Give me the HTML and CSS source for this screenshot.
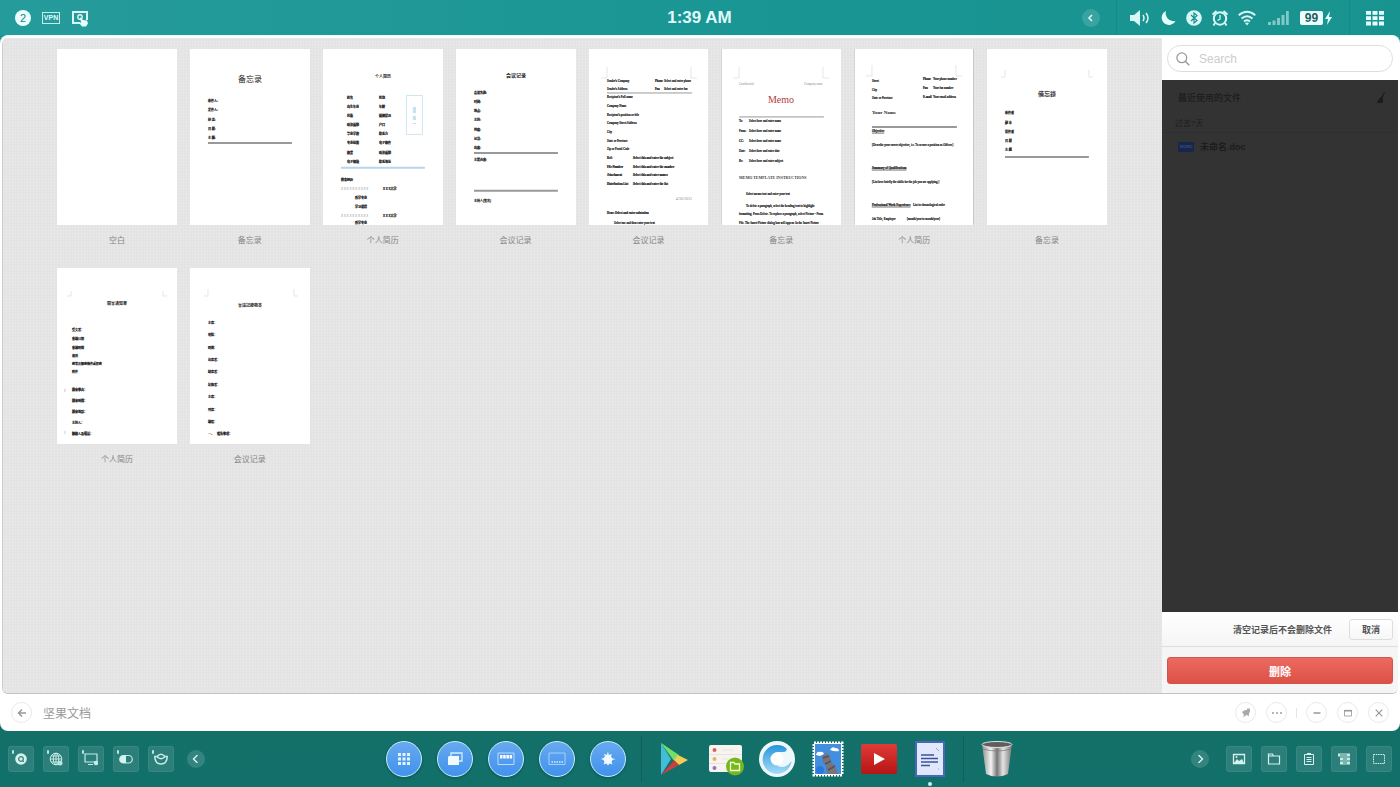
FILE: index.html
```html
<!DOCTYPE html>
<html lang="zh-CN">
<head>
<meta charset="utf-8">
<meta name="viewport" content="width=device-width, initial-scale=1">
<title>坚果文档</title>
<link rel="stylesheet" href="styles.css">
</head>
<body>
<header class="status">
  <div class="status-left">
    <span class="count">2</span>
    <span class="vpn">VPN</span>
    <svg width="18" height="18" viewBox="0 0 18 18"><path d="M9 14H2V3h14v8" fill="none" stroke="#d8f8f8" stroke-width="2"/><circle cx="9" cy="8" r="2.200" fill="none" stroke="#d8f8f8" stroke-width="1.400"/><path d="M9 8l3 3 4 .5 1 3-2 3h-4L8 14l2-.5z" fill="#e4ffff"/></svg>
  </div>
  <time class="clock">1:39 AM</time>
  <div class="status-right">
    <button class="round-arrow" aria-label="收起"><svg width="8" height="8" viewBox="0 0 8 8"><path d="M5 1L2 4l3 3" fill="none" stroke="currentColor" stroke-width="1.500"/></svg></button>
    <span class="bar-line"></span>
    <svg width="20" height="18" viewBox="0 0 20 18"><path d="M0 6h4l6-5v16l-6-5H0z" fill="#d8f8f8"/><path d="M13 6q2 3 0 6M16 4q4 5 0 10" fill="none" stroke="#d8f8f8" stroke-width="1.500"/></svg>
    <svg width="16" height="16" viewBox="0 0 16 16"><path d="M6 1a7.300 7.300 0 1 0 9.500 10A8 8 0 0 1 6 1z" fill="#e4ffff"/></svg>
    <svg width="16" height="16" viewBox="0 0 16 16"><circle cx="8" cy="8" r="7.800" fill="#d8f8f8"/><path d="M5 5l6 5.500L8 13V3l3 2.500L5 11" fill="none" stroke="#1a8d8c" stroke-width="1.200"/></svg>
    <svg width="16" height="16" viewBox="0 0 16 16"><circle cx="8" cy="8.500" r="6.200" fill="none" stroke="#d8f8f8" stroke-width="2"/><path d="M8 5v4L5.500 10.500" fill="none" stroke="#d8f8f8" stroke-width="1.300"/><path d="M.5 4.500l4-3.500M15.500 4.500l-4-3.500M3 13l-1.500 2.500M13 13l1.500 2.500" stroke="#d8f8f8" stroke-width="1.800"/></svg>
    <svg width="18" height="16" viewBox="0 0 18 16"><g fill="none" stroke="#d8f8f8" stroke-width="2"><path d="M.7 5.200q8.300-7 16.600 0M3.500 8.500q5.500-4.500 11 0M6 11.500q3-2.400 6 0"/></g><path d="M7 13q2-1.200 4 0l-2 2.500z" fill="#d8f8f8"/></svg>
    <svg class="signal" width="21" height="16" viewBox="0 0 21 16"><path d="M0 12h3v3H0zM4.500 10.500h3V15h-3zM9 8h3v7H9zM13.500 5h3v10h-3zM18 1h2.800v14H18z" fill="#7fc9c8"/></svg>
    <span class="battery"><span class="cell">99</span><svg width="9" height="14" viewBox="0 0 9 14"><path d="M6 0L1 8h3L3 14l5-8H5z" fill="#e4ffff"/></svg></span>
    <span class="bar-line"></span>
    <svg width="18" height="16" viewBox="0 0 18 16"><path d="M0 1h5v3.800H0zM6.500 1h5v3.800h-5zM13 1h5v3.800h-5zM0 6.300h5v3.800H0zM6.500 6.300h5v3.800h-5zM13 6.300h5v3.800h-5zM0 11.600h5v3.800H0zM6.500 11.600h5v3.800h-5zM13 11.600h5v3.800h-5z" fill="#e4ffff"/></svg>
  </div>
</header>

<main class="window">
  <div class="workspace">
    <section class="templates">
      <a class="template" href="#"><svg class="page" viewBox="0 0 120 176"></svg><span class="name">空白</span></a>
      <a class="template" href="#"><svg class="page" viewBox="0 0 120 176">
        <text class="mid s8 serif" x="60" y="33">备忘录</text>
        <g class="s3 b"><text x="18" y="53">收件人:</text><text x="18" y="62">发件人:</text><text x="18" y="72">抄 送:</text><text x="18" y="81">日 期:</text><text x="18" y="90">主 题:</text></g>
        <path class="rule" d="M18 94h84"/>
      </svg><span class="name">备忘录</span></a>
      <a class="template" href="#"><svg class="page" viewBox="0 0 120 176">
        <text class="mid s4 b" x="60" y="29">个人简历</text>
        <g class="s3 b"><text x="24" y="50">姓名</text><text x="24" y="59">出生年月</text><text x="24" y="68">民族</text><text x="24" y="77">政治面貌</text><text x="24" y="86">毕业学校</text><text x="24" y="95">专业技能</text><text x="24" y="105">籍贯</text><text x="24" y="114">电子邮箱</text>
        <text x="56" y="50">性别</text><text x="56" y="59">年龄</text><text x="56" y="68">婚姻状况</text><text x="56" y="77">户口</text><text x="56" y="86">联系方</text><text x="56" y="95">电子邮件</text><text x="56" y="105">政治面貌</text><text x="56" y="114">联系地址</text>
        <text x="18" y="132">教育经历</text><text x="32" y="150">所学专业</text><text x="32" y="159">学习课程</text><text x="60" y="141">X X X大学</text><text x="60" y="168">X X X大学</text><text x="32" y="175">所学专业</text></g>
        <g class="s3 dim"><text x="18" y="141">X X X X X X X X X X</text><text x="18" y="168">X X X X X X X X X X</text></g>
        <path class="photo" d="M83.500 46.500h16v39h-16z"/><path d="M90 58h3v6h-3zM90 67h3v4h-3zM90 74h3v1h-3z" fill="#c5e2f5"/>
        <path class="rule blue" d="M18 119h84"/>
      </svg><span class="name">个人简历</span></a>
      <a class="template" href="#"><svg class="page" viewBox="0 0 120 176">
        <text class="mid s5 b serif" x="60" y="28">会议记录</text>
        <g class="s3 b"><text x="18" y="45">会议名称:</text><text x="18" y="54">时间:</text><text x="18" y="63">地点:</text><text x="18" y="72">主持:</text><text x="18" y="82">列席:</text><text x="18" y="91">记录:</text><text x="18" y="100">出席:</text></g>
        <path class="rule" d="M18 104h84M18 142h84"/>
        <text class="s3 b" x="18" y="112">主要内容:</text><text class="s3" x="18" y="153">主持人(签名)</text>
      </svg><span class="name">会议记录</span></a>
      <a class="template" href="#"><svg class="page latin" viewBox="0 0 120 176">
        <path class="crop" d="M12 29h6V18M108 29h-6V18"/>
        <g class="s3"><text x="18" y="33">Sender's Company</text><text x="18" y="41">Sender's Address</text><text x="75" y="33">Select and enter phone</text><text x="75" y="41">Select and enter fax</text><text x="18" y="49">Recipient's Full name</text><text x="18" y="58">Company Name</text><text x="18" y="67">Recipient's position or title</text><text x="18" y="75">Company Street Address</text><text x="18" y="84">City</text><text x="18" y="93">State or Province</text><text x="18" y="101">Zip or Postal Code</text><text x="25" y="175">Select me and then enter your text</text></g>
        <g class="s3 b"><text x="66" y="33">Phone</text><text x="66" y="41">Fax</text><text x="18" y="110">Ref:</text><text x="18" y="119">File Number</text><text x="18" y="127">Attachment</text><text x="18" y="136">Distribution List</text><text x="44" y="110">Select this and enter the subject</text><text x="44" y="119">Select this and enter the number</text><text x="44" y="127">Select this and enter names</text><text x="44" y="136">Select this and enter the list</text><text x="18" y="165">Dear: Select and enter salutation</text></g>
        <text class="s4 end dim" x="103" y="151">4/30/2013</text>
        <path class="rule thin" d="M18 44h85"/><path class="edge" d="M120 0v176"/>
      </svg><span class="name">会议记录</span></a>
      <a class="template" href="#"><svg class="page latin" viewBox="0 0 120 176">
        <path class="crop" d="M12 29h6V18M108 29h-6V18"/>
        <text class="s3 dim" x="18" y="36">Confidential</text><text class="s3 end dim" x="102" y="36">Company name</text>
        <text class="mid s10 red" x="60" y="54">Memo</text>
        <path class="rule thin" d="M18 68h85"/>
        <g class="s3"><text x="18" y="73">To:</text><text x="18" y="83">From:</text><text x="18" y="93">CC:</text><text x="18" y="103">Date:</text><text x="18" y="113">Re:</text><text x="28" y="73">Select here and enter name</text><text x="28" y="83">Select here and enter name</text><text x="28" y="93">Select here and enter name</text><text x="28" y="103">Select here and enter date</text><text x="28" y="113">Select here and enter subject</text>
        <text x="25" y="146">Select memo text and enter your text</text><text x="25" y="158">To delete a paragraph, select the heading text to highlight</text><text x="18" y="166">formatting. Press Delete. To replace a paragraph, select Picture - From</text><text x="18" y="175">File. The Insert Picture dialog box will appear. In the Insert Picture</text></g>
        <text class="s4 b grey" x="18" y="130">MEMO TEMPLATE INSTRUCTIONS</text>
        <path class="edge" d="M0 0v176"/>
      </svg><span class="name">备忘录</span></a>
      <a class="template" href="#"><svg class="page latin" viewBox="0 0 120 176">
        <path class="crop" d="M12 27h6V16M108 27h-6V16"/>
        <g class="s3"><text x="18" y="33">Street</text><text x="18" y="42">City</text><text x="18" y="50">State or Province</text><text x="79" y="31">Your phone number</text><text x="79" y="40">Your fax number</text><text x="79" y="49">Your email address</text><text x="18" y="97">[Describe your career objective, i.e. To secure a position as Officer.]</text><text x="18" y="134">[List here briefly the skills for the job you are applying.]</text><text x="59" y="157">List in chronological order</text><text x="18" y="171">Job Title, Employer</text><text x="53" y="171">[month/year to month/year]</text></g>
        <g class="s3 b"><text x="69" y="31">Phone</text><text x="69" y="40">Fax</text><text x="69" y="49">E-mail</text><text class="u" x="18" y="83">Objective</text><text class="u" x="18" y="120">Summary of Qualifications</text><text class="u" x="18" y="157">Professional Work Experience</text></g>
        <text class="s5 b" x="18" y="65">Your Name</text>
        <path class="rule" d="M18 78h85"/><path class="edge" d="M0 0v176M120 0v176"/>
      </svg><span class="name">个人简历</span></a>
      <a class="template" href="#"><svg class="page" viewBox="0 0 120 176">
        <path class="crop" d="M14 28h4v-7M106 28h-4v-7"/>
        <text class="mid s6 b grey" x="60" y="47">備忘錄</text>
        <g class="s3 b"><text x="18" y="65">收件者</text><text x="18" y="75">副 本</text><text x="18" y="84">寄件者</text><text x="18" y="93">日 期</text><text x="18" y="102">主 題</text></g>
        <path class="rule" d="M18 108h84"/>
      </svg><span class="name">备忘录</span></a>
      <a class="template" href="#"><svg class="page" viewBox="0 0 120 176">
        <path class="crop" d="M10 28h4v-5M110 28h-4v-5"/>
        <text class="mid s4 b" x="60" y="37">開會通知單</text>
        <g class="s3"><text x="15" y="63">受文者：</text><text x="15" y="72">會議日期</text><text x="15" y="81">會議時間</text><text x="15" y="89">速別</text><text x="15" y="97">密等及解密條件或保密</text><text x="15" y="105">附件</text></g>
        <g class="s3 b"><text x="15" y="123">開會事由：</text><text x="15" y="134">開會時間：</text><text x="15" y="145">開會地點：</text><text x="15" y="156">主持人：</text><text x="15" y="167">聯絡人及電話：</text></g>
        <path d="M8 121v3" stroke="#efb0b0"/><path d="M8 163v3" stroke="#ccc"/>
      </svg><span class="name">个人简历</span></a>
      <a class="template" href="#"><svg class="page" viewBox="0 0 120 176">
        <path class="crop" d="M14 28h4v-7M108 28h-4v-7"/>
        <text class="mid s4 b" x="60" y="39">會議記錄範本</text>
        <g class="s3"><text x="18" y="56">主席：</text><text x="18" y="68">地點：</text><text x="18" y="81">時間：</text><text x="18" y="93">出席者：</text><text x="18" y="105">缺席者：</text><text x="18" y="118">記錄者：</text><text x="18" y="130">主席：</text><text x="18" y="143">列席：</text><text x="18" y="155">議程：</text><text x="18" y="167">一、</text><text class="b" x="27" y="167">報告事項：</text></g>
      </svg><span class="name">会议记录</span></a>
    </section>

    <aside class="sidebar">
      <div class="search-area">
        <label class="search">
          <svg width="14" height="14" viewBox="0 0 14 14"><circle cx="5.800" cy="5.800" r="4.900" fill="none" stroke="#999" stroke-width="1.300"/><path d="M9.300 9.300l4 4" stroke="#999" stroke-width="1.500"/></svg>
          <input type="search" placeholder="Search" aria-label="Search">
        </label>
      </div>
      <div class="recent">
        <div class="recent-head"><h2>最近使用的文件</h2><svg width="10" height="12" viewBox="0 0 10 12"><path d="M8 0L6 4 2 8 1 11h6V5L9 0z" fill="#1c1c1c"/></svg></div>
        <h3>过去7天</h3>
        <a class="file" href="#"><span class="file-type">WORD</span>未命名.doc</a>
      </div>
      <div class="confirm"><span>清空记录后不会删除文件</span><button class="cancel">取消</button></div>
      <div class="delete-area"><button class="delete">删除</button></div>
    </aside>
  </div>

  <footer class="window-bar">
    <button class="circle" aria-label="返回"><svg width="10" height="10" viewBox="0 0 10 10"><path d="M9 5H2M5 1.500L1.500 5 5 8.500" fill="none" stroke="#999" stroke-width="1.500"/></svg></button>
    <h1>坚果文档</h1>
    <div class="window-tools">
      <button class="circle" aria-label="固定"><svg width="10" height="10" viewBox="0 0 10 10"><path d="M6 .5h3V4L8 5v3L5.500 7 2 9.500 3 7 1 4l3-2h2z" fill="#aaa"/></svg></button>
      <button class="circle" aria-label="更多"><svg width="10" height="10" viewBox="0 0 10 10"><path d="M0 4h2v2H0zM4 4h2v2H4zM8 4h2v2H8z" fill="#b5b5b5"/></svg></button>
      <span class="tool-line"></span>
      <button class="circle" aria-label="最小化"><svg width="10" height="10" viewBox="0 0 10 10"><path d="M1.500 5h7" stroke="#999" stroke-width="1.500"/></svg></button>
      <button class="circle" aria-label="最大化"><svg width="10" height="10" viewBox="0 0 10 10"><path d="M1.500 2.500h7v5.500h-7z" fill="none" stroke="#aaa"/><path d="M1 2.700h8" stroke="#999" stroke-width="1.600"/></svg></button>
      <button class="circle" aria-label="关闭"><svg width="10" height="10" viewBox="0 0 10 10"><path d="M1.700 1.700l6.600 6.600M8.300 1.700L1.700 8.300" stroke="#999" stroke-width="1.200"/></svg></button>
    </div>
  </footer>
</main>

<nav class="dock">
  <div class="dock-left">
    <button class="tile marked" aria-label="搜索"><svg width="14" height="14" viewBox="0 0 14 14"><circle cx="7" cy="7" r="5.800" fill="#d4f2ee"/><circle cx="7" cy="7" r="2.300" fill="none" stroke="#38857f" stroke-width="1.300"/><path d="M8 8l2 2" stroke="#38857f"/></svg></button>
    <button class="tile marked" aria-label="浏览器"><svg width="14" height="14" viewBox="0 0 14 14"><g fill="none" stroke="#c4ebe6"><circle cx="7" cy="7" r="5.800"/><ellipse cx="7" cy="7" rx="2.700" ry="5.800"/><path d="M1 7h12M7 1v12M2 4h10M2 10h10"/></g><circle cx="11" cy="11" r="2.500" fill="#b8e2dc"/></svg></button>
    <button class="tile marked" aria-label="屏幕"><svg width="14" height="14" viewBox="0 0 14 14"><path d="M1 2h12v8H1zM4 12.500h5" fill="none" stroke="#c4ebe6" stroke-width="1.200"/><circle cx="12" cy="11" r="2.300" fill="#c4ebe6"/></svg></button>
    <button class="tile marked" aria-label="开关"><svg width="14" height="14" viewBox="0 0 14 14"><rect x=".7" y="3.500" width="12.600" height="7.500" rx="3.700" fill="none" stroke="#c4ebe6" stroke-width="1.200"/><path d="M7 3.500v7.500H4.500a3.700 3.700 0 0 1 0-7.500z" fill="#d4f2ee"/></svg></button>
    <button class="tile marked" aria-label="碗"><svg width="14" height="14" viewBox="0 0 14 14"><g fill="none" stroke="#c4ebe6" stroke-width="1.500"><path d="M.8 4.500h2Q7 9 11.200 4.500h2Q13 12 7 12T.8 4.500z"/><path d="M3 4.500Q7 0 11 4.500"/></g></svg></button>
    <button class="round-arrow" aria-label="收起左侧"><svg width="8" height="8" viewBox="0 0 8 8"><path d="M5.500 0l-4 4 4 4" fill="none" stroke="currentColor" stroke-width="1.300"/></svg></button>
  </div>
  <div class="dock-apps">
    <button class="orb" aria-label="应用"><svg width="14" height="14" viewBox="0 0 14 14"><path d="M1 1h3v3H1zM5.500 1h3v3h-3zM10 1h3v3h-3zM1 5.500h3v3H1zM5.500 5.500h3v3h-3zM10 5.500h3v3h-3zM1 10h3v3H1zM5.500 10h3v3h-3zM10 10h3v3h-3z" fill="#e2f5ff"/></svg></button>
    <button class="orb" aria-label="窗口"><svg width="16" height="14" viewBox="0 0 16 14"><path d="M4 4V1h11v8h-3" fill="none" stroke="#d5edff" stroke-width="1.300"/><path d="M1 5l1-1h10v9H1z" fill="#eefaff"/></svg></button>
    <button class="orb" aria-label="多任务"><svg width="18" height="14" viewBox="0 0 18 14"><path d="M1 1h16v11.500H1z" fill="none" stroke="#b9dcff"/><path d="M3 3h2.500v3.500H3zM6.200 3h2.500v3.500H6.200zM9.400 3h2.500v3.500H9.400zM12.600 3h2.500v3.500h-2.500z" fill="#fff"/></svg></button>
    <button class="orb" aria-label="桌面"><svg width="18" height="14" viewBox="0 0 18 14"><path d="M1 1h16v11.500H1z" fill="none" stroke="#a5cffa"/><path d="M3.500 10h12" stroke="#d5edff" stroke-width="1.500" stroke-dasharray="1.500 1"/></svg></button>
    <button class="orb" aria-label="设置"><svg width="16" height="16" viewBox="0 0 16 16"><path d="M8 .5l.8 3.500 3-1-.8 2.500 1.500 2 3 .5-3 1-1 2 1 2.500-3-1-1.500 2-1.500-2-3 1 1-2.500-1-2-2.500-1L3.500 7 5 5.500 3.800 3l3 1z" fill="#f0faff"/></svg></button>
    <span class="dock-line"></span>
    <button class="app" aria-label="Play"><svg width="36" height="36" viewBox="0 0 36 36"><path d="M4 2v32l10-16z" fill="#42bdd6"/><path d="M4 2l17 13-4 5z" fill="#53db7f"/><path d="M4 34l13-15 5 3z" fill="#a62e35"/><path d="M4 2l18 12-5 5z" fill="#76dd65"/><path d="M21 14l10 5-9 5-5-5z" fill="#f1ce55"/><path d="M4 34l13-14 5 4z" fill="#c34343"/></svg></button>
    <button class="app" aria-label="文件"><svg width="36" height="36" viewBox="0 0 36 36"><rect x="1" y="4" width="33" height="27" rx="2" fill="#f7f4f0"/><circle cx="6.500" cy="9" r="2" fill="#da625d"/><circle cx="6.500" cy="18" r="2" fill="#efaf6b"/><circle cx="6.500" cy="27" r="2" fill="#8b78b5"/><path d="M14 9h12M14 18h12M1 13.500h33M1 22.500h33" stroke="#e6e3e0"/><circle cx="27" cy="25.500" r="9" fill="#77b71e"/><path d="M22.500 21.500H26l1 1.500h4.500v6.500h-9z" fill="none" stroke="#efffd5" stroke-width="1.300"/></svg></button>
    <button class="app" aria-label="网络"><svg width="36" height="36" viewBox="0 0 36 36"><defs><linearGradient id="swirl" x2="0" y2="1"><stop stop-color="#2595dc"/><stop offset="1" stop-color="#a6dcf8"/></linearGradient></defs><circle cx="18" cy="18" r="18" fill="#eef7fc"/><path d="M27 7a14.500 14.500 0 1 0 5.500 13c-3 5-8 7-13 5.500l-5-13c4-3 9-.5 12-2 1.500-1 1.500-2.500.5-3.500z" fill="url(#swirl)"/><circle cx="18" cy="18" r="6.500" fill="#fff"/></svg></button>
    <button class="app" aria-label="图库"><svg width="36" height="36" viewBox="0 0 36 36"><path d="M4 2h28v32H4z" fill="#fff" stroke="#fff" stroke-width="3" stroke-dasharray="2 1"/><path d="M5 3h26v30H5z" fill="#428fdf"/><path d="M13 14l4-2 3 3 1 6 4 4 3 8H17l-1-8-4-6z" fill="#77747c"/><path d="M13 17l6-2M15 23l6-3M18 29l7-4" stroke="#55525e" stroke-width="1.500"/><path d="M6 14q1-4 4-3 3-1 4 2l-4 2zM20 9q2-4 5-2 4 0 4 3-4 1-9-1z" fill="#fff"/><circle cx="10" cy="29" r="4" fill="#2878df"/></svg></button>
    <button class="app" aria-label="视频"><svg width="36" height="36" viewBox="0 0 36 36"><defs><linearGradient id="red" x2="0" y2="1"><stop stop-color="#e03b35"/><stop offset="1" stop-color="#b51515"/></linearGradient></defs><rect y="3" width="36" height="30" rx="2" fill="url(#red)"/><path d="M13 12l11 6-11 6z" fill="#fff"/></svg></button>
    <button class="app running" aria-label="文档"><svg width="36" height="36" viewBox="0 0 36 36"><path d="M4 1h28v34H4z" fill="#e2e8fb" stroke="#4966b8" stroke-width="2"/><path d="M9 14h13M9 17.500h17M9 21h17M9 24.500h9" stroke="#3e5299" stroke-width="1.500"/><path d="M24 7l3 3M26 28h1" stroke="#96a3ca"/></svg></button>
    <span class="dock-line"></span>
    <button class="app" aria-label="废纸篓"><svg width="36" height="36" viewBox="0 0 36 36"><defs><linearGradient id="tin"><stop stop-color="#8e9291"/><stop offset=".3" stop-color="#f3f3f3"/><stop offset=".5" stop-color="#777"/><stop offset=".7" stop-color="#e4e4e4"/><stop offset="1" stop-color="#777"/></linearGradient></defs><path d="M3 3h30l-4 30q-11 5-22 0z" fill="url(#tin)"/><ellipse cx="18" cy="3.500" rx="15" ry="3" fill="#625d5d" stroke="#e3e3e3"/><path d="M4 8q14 4 28 0" fill="none" stroke="#777" stroke-width=".7"/></svg></button>
  </div>
  <div class="dock-right">
    <button class="round-arrow" aria-label="收起右侧"><svg width="8" height="8" viewBox="0 0 8 8"><path d="M2.500 0l4 4-4 4" fill="none" stroke="currentColor" stroke-width="1.300"/></svg></button>
    <button class="tile" aria-label="图片"><svg width="14" height="14" viewBox="0 0 14 14"><path d="M1.500 2.500h11v9h-11z" fill="none" stroke="#d4f2ee" stroke-width="1.300"/><path d="M2 11l3-4 2 2 3-2 2 4z" fill="#d4f2ee"/><circle cx="4.500" cy="5" r="1" fill="#d4f2ee"/></svg></button>
    <button class="tile" aria-label="文件夹"><svg width="14" height="14" viewBox="0 0 14 14"><path d="M1.500 2h4l1 2h6v8h-11zM1.500 4h6" fill="none" stroke="#d4f2ee" stroke-width="1.200"/></svg></button>
    <button class="tile" aria-label="剪贴板"><svg width="14" height="14" viewBox="0 0 14 14"><path d="M2.500 2.500h9v10h-9zM4.500 5.500h5M4.500 7.500h5M4.500 9.500h5" fill="none" stroke="#d4f2ee"/><path d="M5 1h4v2H5z" fill="#d4f2ee"/></svg></button>
    <button class="tile" aria-label="列表"><svg width="14" height="14" viewBox="0 0 14 14"><path d="M1 1.500h12v3H1zM3 5.500h10v3H3zM3 9.500h10v3H3z" fill="#c8ebe6"/><path d="M3 3h7M6 7h4M6 11h4" stroke="#2f817a"/></svg></button>
    <button class="tile" aria-label="选区"><svg width="14" height="14" viewBox="0 0 14 14"><path d="M1.500 2.500h11v9h-11z" fill="none" stroke="#d4f2ee" stroke-dasharray="1.500 .8"/></svg></button>
  </div>
</nav>
</body>
</html>
```
FILE: styles.css
```css
* { box-sizing: border-box; }

body {
  display: flex;
  flex-direction: column;
  min-height: 100vh;
  margin: 0;
  background: linear-gradient(#1b9695, #137069 92%, #12706a);
  font-family: "Liberation Sans", "Noto Sans CJK SC", sans-serif;
  color: #555;
}

button {
  display: flex;
  align-items: center;
  justify-content: center;
  flex: none;
  padding: 0;
  border: 0;
  background: none;
  font: inherit;
  color: inherit;
}

a { color: inherit; text-decoration: none; }
h1, h2, h3 { margin: 0; font-size: 12px; font-weight: normal; }
svg { display: block; flex: none; }

/* status bar */
.status {
  display: grid;
  grid-template-columns: 1fr auto 1fr;
  align-items: center;
  height: 35px;
  padding: 0 16px 0 15px;
  background: linear-gradient(90deg, #269b9c, #1a9694 50%, #189390);
  color: #e0fbfb;
}

.status-left { display: flex; align-items: center; gap: 11px; }

.count {
  width: 16px;
  height: 16px;
  border-radius: 50%;
  background: #eaffff;
  color: #1f7f7f;
  font-size: 11px;
  line-height: 16px;
  text-align: center;
}

.vpn {
  width: 18px;
  height: 12px;
  border: 1px solid #c0eeee;
  font-size: 7px;
  font-weight: bold;
  line-height: 10px;
  text-align: center;
}

.clock { font-size: 17px; font-weight: bold; }

.status-right { display: flex; align-items: center; justify-content: flex-end; gap: 10px; }
.status-right .bar-line { margin: 0 3px 0 6px; }
.status-right .battery + .bar-line { margin-right: 6px; }
.status-right .signal { margin: 0 1px 0 2px; }
.bar-line { width: 1px; height: 35px; background: #168a87; }

.battery { display: flex; align-items: center; gap: 1px; }

.cell {
  width: 23px;
  height: 14px;
  border-radius: 2px;
  background: #eaffff;
  color: #23615f;
  font-size: 12px;
  font-weight: bold;
  line-height: 14px;
  text-align: center;
}

.round-arrow {
  width: 18px;
  height: 18px;
  border-radius: 50%;
  background: rgba(255, 255, 255, 0.14);
  color: #e0fbfb;
}

/* application window */
.window {
  display: flex;
  flex: 1;
  flex-direction: column;
  padding: 2px 2px 0;
  border-top: 1px solid #e8ffff;
  border-radius: 8px;
  background: #fff;
}

.workspace {
  display: grid;
  flex: 1;
  grid-template-columns: 1fr 236px;
  overflow: hidden;
  border-bottom: 1px solid #bcc4c4;
  border-left: 1px solid #ccc;
  border-radius: 6px;
}

.templates {
  display: grid;
  grid-template-columns: repeat(8, minmax(0, 1fr));
  align-content: start;
  gap: 21px 13px;
  padding: 11px 55px 11px 54px;
  background:
    repeating-linear-gradient(90deg, rgba(255, 255, 255, 0.12) 0 1px, transparent 1px 3px),
    repeating-linear-gradient(0deg, rgba(255, 255, 255, 0.12) 0 1px, transparent 1px 3px),
    #e3e3e3;
}

.template { display: flex; flex-direction: column; gap: 10px; }

.page {
  width: 100%;
  background: #fff;
  fill: #222;
  font-family: "Liberation Sans", "Noto Sans CJK SC", sans-serif;
}

.latin { font-family: "Liberation Serif", serif; }

.name {
  font-size: 8px;
  line-height: 12px;
  text-align: center;
  color: #858585;
}

.s3 { font-size: 3px; stroke: #222; stroke-width: 0.2px; }
.s4 { font-size: 4px; }
.s5 { font-size: 5px; }
.s6 { font-size: 6px; }
.s8 { font-size: 8px; }
.s10 { font-size: 10px; }
.b { font-weight: bold; }
.u { text-decoration: underline; }
.mid { text-anchor: middle; }
.end { text-anchor: end; }
.serif { font-family: "Liberation Serif", "Noto Sans CJK SC", serif; }
.dim { fill: #888; stroke: none; }
.grey { fill: #444; }
.red { fill: #b03a3a; }
.rule { fill: none; stroke: #999; stroke-width: 2; }
.rule.thin { stroke-width: 1; }
.rule.blue { stroke: #b7d5ee; }
.photo { fill: none; stroke: #cfe6ee; }
.crop { fill: none; stroke: #e6e6e6; stroke-width: 1; }
.edge { fill: none; stroke: #aaa; stroke-width: 1; }

/* recent files */
.sidebar { display: flex; flex-direction: column; background: #f5f5f5; }
.search-area { padding: 7px 5px 8px; background: #fff; }

.search {
  display: flex;
  align-items: center;
  gap: 9px;
  height: 27px;
  padding: 0 8px;
  border: 1px solid #ddd;
  border-radius: 14px;
}

.search input {
  flex: 1;
  min-width: 0;
  padding: 0;
  border: 0;
  outline: 0;
  background: none;
  font: 12px "Liberation Sans", sans-serif;
}

.search input::placeholder { color: #ccc; opacity: 1; }

.recent { flex: 1; background: #333; color: #1c1c1c; }

.recent-head {
  display: flex;
  align-items: center;
  justify-content: space-between;
  height: 35px;
  padding: 0 12px 0 16px;
}

.recent h2 { font-size: 9px; font-weight: 500; }

.recent h3 {
  height: 18px;
  padding-left: 13px;
  border-bottom: 1px solid #2f2f2f;
  font-size: 8px;
  line-height: 18px;
}

.file {
  display: flex;
  align-items: center;
  gap: 6px;
  height: 27px;
  padding-left: 16px;
  font-size: 9px;
  font-weight: bold;
}

.file-type {
  width: 16px;
  height: 10px;
  border-radius: 1px;
  background: #18264f;
  color: #3e4b74;
  font-size: 4px;
  line-height: 10px;
  text-align: center;
}

.confirm {
  display: flex;
  align-items: center;
  justify-content: flex-end;
  gap: 17px;
  height: 35px;
  padding: 0 5px;
  border-bottom: 1px solid #ddd;
  background: linear-gradient(#fff, #f5f5f5);
  font-size: 9px;
  font-weight: bold;
}

.cancel {
  width: 44px;
  height: 21px;
  border: 1px solid #ddd;
  border-radius: 3px;
  background: linear-gradient(#fff, #f7f7f7);
}

.delete-area { padding: 10px 5px 9px; }

.delete {
  width: 100%;
  height: 27px;
  border: 1px solid #d0554c;
  border-radius: 3px;
  background: linear-gradient(#ec6a60, #dd5146);
  color: #fff;
  font-size: 11px;
  font-weight: bold;
}

/* window title and controls */
.window-bar {
  display: flex;
  align-items: center;
  gap: 11px;
  height: 37px;
  padding: 0 9px;
}

.window-bar h1 { color: #999; }
.window-tools { display: flex; align-items: center; gap: 10px; margin-left: auto; }
.tool-line { width: 1px; height: 10px; margin: 0 -1px; background: #e5e5e5; }

.circle {
  width: 21px;
  height: 21px;
  border: 1px solid #e8e8e8;
  border-radius: 50%;
}

/* dock */
.dock {
  display: grid;
  grid-template-columns: 1fr auto 1fr;
  align-items: center;
  height: 56px;
  padding: 0 8px;
}

.dock-left, .dock-right { display: flex; align-items: center; gap: 9px; }
.dock-right { justify-content: flex-end; }
.dock-left .round-arrow { margin-left: 4px; }
.dock-right .round-arrow { margin-right: 8px; }
.dock-apps { display: flex; align-items: center; gap: 15px; }

.tile {
  position: relative;
  width: 26px;
  height: 26px;
  border: 1px solid rgba(255, 255, 255, 0.06);
  border-radius: 3px;
  background: rgba(255, 255, 255, 0.11);
}

.tile.marked::before {
  position: absolute;
  top: 3px;
  left: 3px;
  width: 2px;
  height: 4px;
  border-radius: 1px;
  background: #a9ece4;
  content: "";
}

.orb {
  width: 36px;
  height: 36px;
  border: 1px solid #c5f0ff;
  border-radius: 50%;
  background: linear-gradient(#67a9ee, #4192ee);
  box-shadow: 0 1px 3px rgba(0, 0, 0, 0.25);
}

.app { position: relative; width: 36px; height: 36px; }

.running::after {
  position: absolute;
  top: 41px;
  left: 16px;
  width: 4px;
  height: 4px;
  border-radius: 50%;
  background: #c8f5ef;
  content: "";
}

.dock-line { width: 1px; height: 46px; background: #0f605a; }
```
